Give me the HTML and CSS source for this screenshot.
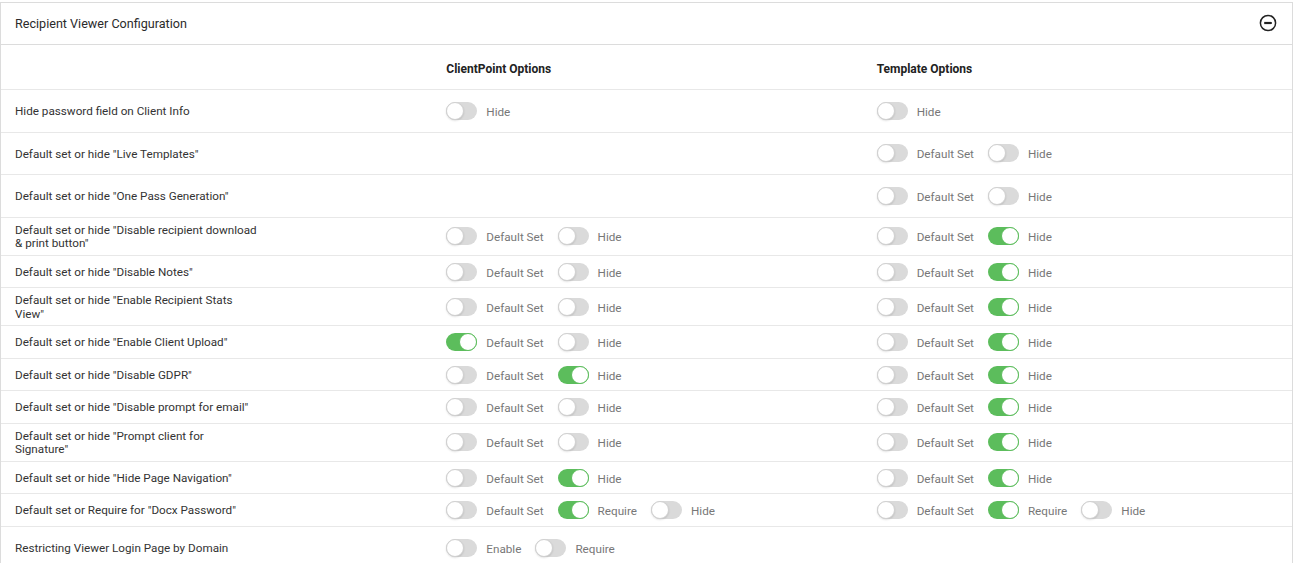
FILE: index.html
```html
<!DOCTYPE html>
<html>
<head>
<meta charset="utf-8">
<link rel="stylesheet" href="styles.css">
</head>
<body>
<div class="panel">
  <div class="panel-head">
    <span class="title">Recipient Viewer Configuration</span>
    <svg class="collapse" width="18" height="18" viewBox="0 0 18 18"><circle cx="9" cy="9" r="7.6" fill="none" stroke="#222" stroke-width="1.5"/><line x1="5.2" y1="9" x2="12.8" y2="9" stroke="#222" stroke-width="2.2"/></svg>
  </div>
  <div class="row colhead">
    <div class="cell"></div>
    <div class="cell"><b>ClientPoint Options</b></div>
    <div class="cell"><b>Template Options</b></div>
  </div>

  <div class="row tall">
    <div class="cell lbl">Hide password field on Client Info</div>
    <div class="cell"><span class="opt"><span class="tg"></span>Hide</span></div>
    <div class="cell"><span class="opt"><span class="tg"></span>Hide</span></div>
  </div>
  <div class="row tall">
    <div class="cell lbl">Default set or hide "Live Templates"</div>
    <div class="cell"></div>
    <div class="cell"><span class="opt"><span class="tg"></span>Default Set</span><span class="opt"><span class="tg"></span>Hide</span></div>
  </div>
  <div class="row tall">
    <div class="cell lbl">Default set or hide "One Pass Generation"</div>
    <div class="cell"></div>
    <div class="cell"><span class="opt"><span class="tg"></span>Default Set</span><span class="opt"><span class="tg"></span>Hide</span></div>
  </div>
  <div class="row">
    <div class="cell lbl">Default set or hide "Disable recipient download &amp; print button"</div>
    <div class="cell"><span class="opt"><span class="tg"></span>Default Set</span><span class="opt"><span class="tg"></span>Hide</span></div>
    <div class="cell"><span class="opt"><span class="tg"></span>Default Set</span><span class="opt"><span class="tg on"></span>Hide</span></div>
  </div>
  <div class="row">
    <div class="cell lbl">Default set or hide "Disable Notes"</div>
    <div class="cell"><span class="opt"><span class="tg"></span>Default Set</span><span class="opt"><span class="tg"></span>Hide</span></div>
    <div class="cell"><span class="opt"><span class="tg"></span>Default Set</span><span class="opt"><span class="tg on"></span>Hide</span></div>
  </div>
  <div class="row">
    <div class="cell lbl">Default set or hide "Enable Recipient Stats View"</div>
    <div class="cell"><span class="opt"><span class="tg"></span>Default Set</span><span class="opt"><span class="tg"></span>Hide</span></div>
    <div class="cell"><span class="opt"><span class="tg"></span>Default Set</span><span class="opt"><span class="tg on"></span>Hide</span></div>
  </div>
  <div class="row">
    <div class="cell lbl">Default set or hide "Enable Client Upload"</div>
    <div class="cell"><span class="opt"><span class="tg on"></span>Default Set</span><span class="opt"><span class="tg"></span>Hide</span></div>
    <div class="cell"><span class="opt"><span class="tg"></span>Default Set</span><span class="opt"><span class="tg on"></span>Hide</span></div>
  </div>
  <div class="row">
    <div class="cell lbl">Default set or hide "Disable GDPR"</div>
    <div class="cell"><span class="opt"><span class="tg"></span>Default Set</span><span class="opt"><span class="tg on"></span>Hide</span></div>
    <div class="cell"><span class="opt"><span class="tg"></span>Default Set</span><span class="opt"><span class="tg on"></span>Hide</span></div>
  </div>
  <div class="row">
    <div class="cell lbl">Default set or hide "Disable prompt for email"</div>
    <div class="cell"><span class="opt"><span class="tg"></span>Default Set</span><span class="opt"><span class="tg"></span>Hide</span></div>
    <div class="cell"><span class="opt"><span class="tg"></span>Default Set</span><span class="opt"><span class="tg on"></span>Hide</span></div>
  </div>
  <div class="row">
    <div class="cell lbl">Default set or hide "Prompt client for Signature"</div>
    <div class="cell"><span class="opt"><span class="tg"></span>Default Set</span><span class="opt"><span class="tg"></span>Hide</span></div>
    <div class="cell"><span class="opt"><span class="tg"></span>Default Set</span><span class="opt"><span class="tg on"></span>Hide</span></div>
  </div>
  <div class="row">
    <div class="cell lbl">Default set or hide "Hide Page Navigation"</div>
    <div class="cell"><span class="opt"><span class="tg"></span>Default Set</span><span class="opt"><span class="tg on"></span>Hide</span></div>
    <div class="cell"><span class="opt"><span class="tg"></span>Default Set</span><span class="opt"><span class="tg on"></span>Hide</span></div>
  </div>
  <div class="row">
    <div class="cell lbl">Default set or Require for "Docx Password"</div>
    <div class="cell"><span class="opt"><span class="tg"></span>Default Set</span><span class="opt"><span class="tg on"></span>Require</span><span class="opt"><span class="tg"></span>Hide</span></div>
    <div class="cell"><span class="opt"><span class="tg"></span>Default Set</span><span class="opt"><span class="tg on"></span>Require</span><span class="opt"><span class="tg"></span>Hide</span></div>
  </div>
  <div class="row tall last">
    <div class="cell lbl">Restricting Viewer Login Page by Domain</div>
    <div class="cell"><span class="opt"><span class="tg"></span>Enable</span><span class="opt"><span class="tg"></span>Require</span></div>
    <div class="cell"></div>
  </div>
</div>
</body>
</html>
```

FILE: styles.css
```css
html, body {
  margin: 0;
  padding: 0;
  background: #fff;
}
body {
  font-family: Roboto, "Liberation Sans", Arial, sans-serif;
  font-size: 11.7px;
  color: #333;
}
.panel {
  margin-top: 2px;
  width: 1293px;
  box-sizing: border-box;
  border: 1px solid #dcdcdc;
  border-bottom: none;
}
.panel-head {
  height: 41px;
  display: flex;
  align-items: center;
  justify-content: space-between;
  padding: 0 15px 0 14px;
  border-bottom: 1px solid #dcdcdc;
}
.title {
  color: #2b2b2b;
  font-size: 12.6px;
}
.collapse {
  display: block;
  margin-top: -1px;
}
.row {
  display: grid;
  grid-template-columns: 1fr 1fr 1fr;
  min-height: 31.5px;
  border-bottom: 1px solid #e8e8e8;
}
.row.tall {
  min-height: 41.6px;
}
.row.colhead {
  min-height: 44px;
}
.row.colhead .cell {
  padding-top: 8px;
  padding-bottom: 4px;
}
.row.last {
  border-bottom: none;
}
.cell {
  display: flex;
  align-items: center;
  padding: 6px 15px 4px;
}
.cell:first-child {
  padding-left: 14px;
}
.colhead b {
  font-weight: 700;
  color: #222;
  font-size: 12px;
}
.lbl {
  line-height: 13.5px;
  color: #333;
  max-width: 243px;
  display: block;
  align-self: center;
}
.opt {
  display: inline-flex;
  align-items: center;
  gap: 9px;
  margin-right: 14px;
  color: #777;
}
.tg {
  position: relative;
  display: inline-block;
  width: 31px;
  height: 18px;
  border-radius: 9px;
  background: #dadada;
  flex: none;
  margin-top: -2px;
}
.tg::after {
  content: "";
  position: absolute;
  left: 0;
  top: 0;
  width: 18px;
  height: 18px;
  box-sizing: border-box;
  border-radius: 50%;
  background: #fff;
  border: 1px solid #d0d0d0;
  box-shadow: 0 1px 2px rgba(0,0,0,0.12);
}
.tg.on {
  background: #5cbd5c;
}
.tg.on::after {
  left: 13px;
  border-color: #5cbd5c;
  box-shadow: none;
}
```
